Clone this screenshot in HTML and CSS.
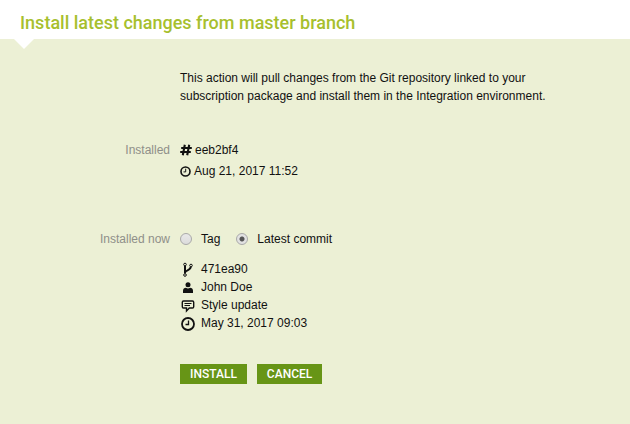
FILE: index.html
```html
<!DOCTYPE html>
<html lang="en">
<head>
<meta charset="utf-8">
<title>Install latest changes from master branch</title>
<link rel="stylesheet" href="styles.css">
</head>
<body>
<header class="header"><h1 class="title">Install latest changes from master branch</h1></header>
<main class="panel">
  <form class="form">
    <p class="intro">This action will pull changes from the Git repository linked to your subscription package and install them in the Integration environment.</p>
    <section class="row installed">
      <h2 class="label">Installed</h2>
      <ul class="list current">
        <li class="item">
          <svg class="icon-small" viewBox="0 0 12 12" aria-hidden="true"><path d="M4.800 .8 2.800 11.200M9.200 .8 7.200 11.200M1.200 4h10.600M.2 8h10.600" fill="none" stroke="currentColor" stroke-width="2.100"/></svg>
          <span>eeb2bf4</span>
        </li>
        <li class="item">
          <svg class="icon-clock" viewBox="0 0 11 11" aria-hidden="true"><circle cx="5.500" cy="5.500" r="4.500" fill="none" stroke="currentColor" stroke-width="1.600"/><path d="M5.700 2.700v3.200H3.500" fill="none" stroke="currentColor"/></svg>
          <span>Aug 21, 2017 11:52</span>
        </li>
      </ul>
    </section>
    <section class="row target">
      <h2 class="label" id="target-label">Installed now</h2>
      <div>
        <div class="choices" role="radiogroup" aria-labelledby="target-label">
          <label class="choice"><input class="radio" type="radio" name="source" value="tag">Tag</label>
          <label class="choice"><input class="radio" type="radio" name="source" value="commit" checked>Latest commit</label>
        </div>
        <ul class="list commit">
          <li class="item">
            <svg class="icon" viewBox="0 0 16 16" aria-hidden="true"><g fill="none" stroke="currentColor"><circle cx="5" cy="3.500" r="1.300"/><circle cx="5" cy="14" r="1.300"/><circle cx="11" cy="4.500" r="1.300"/><path stroke-width="2" d="M5 5v7.500M5 11.800c0-3 5.500-2 5.700-5.800"/></g></svg>
            <span>471ea90</span>
          </li>
          <li class="item">
            <svg class="icon" viewBox="0 0 16 16" aria-hidden="true"><g fill="currentColor"><circle cx="8" cy="5.800" r="2.500"/><path d="M3 14v-2.300C3 9.800 4.200 8.900 6 8.700c1.300.9 2.700.9 4 0 1.800.2 3 1.100 3 3V14z"/></g></svg>
            <span>John Doe</span>
          </li>
          <li class="item">
            <svg class="icon" viewBox="0 0 16 16" aria-hidden="true"><path d="M3.500 4h9q1.200 0 1.200 1.200v4.600q0 1.200-1.200 1.200H9.300L6.500 13.900V11h-3q-1.200 0-1.200-1.200V5.200q0-1.200 1.200-1.200z" fill="none" stroke="currentColor" stroke-width="1.400"/><path d="M4.500 6.500h7M4.500 8.500h5.500" stroke="currentColor"/></svg>
            <span>Style update</span>
          </li>
          <li class="item">
            <svg class="icon" viewBox="0 0 16 16" aria-hidden="true"><circle cx="8" cy="9" r="6" fill="none" stroke="currentColor" stroke-width="1.800"/><path d="M8.500 5.500v4H5.500" fill="none" stroke="currentColor" stroke-width="1.300"/></svg>
            <span>May 31, 2017 09:03</span>
          </li>
        </ul>
        <div class="actions">
          <button class="button" type="submit">INSTALL</button>
          <button class="button" type="button">CANCEL</button>
        </div>
      </div>
    </section>
  </form>
</main>
</body>
</html>
```
FILE: styles.css
```css
* {
  box-sizing: border-box;
}

body {
  margin: 0;
  min-height: 100vh;
  display: flex;
  flex-direction: column;
  background: #fff;
  color: #111;
  font: 12px/18px "Liberation Sans", Arial, sans-serif;
}

.header {
  padding: 11px 20px 4px;
}

.title {
  margin: 0;
  color: #a7bf2e;
  font: 500 18px/24px Roboto, sans-serif;
}

.panel {
  position: relative;
  flex: 1;
  padding: 30px 20px 40px;
  background: #ecf0d5;
}

.panel::before {
  content: "";
  position: absolute;
  top: 0;
  left: 14px;
  border: 10px solid transparent;
  border-top-color: #fff;
  border-bottom: 0;
}

.intro {
  max-width: 540px;
  margin: 0 0 36px;
  padding-left: 160px;
}

.row {
  display: grid;
  grid-template-columns: 150px 1fr;
  column-gap: 10px;
}

.installed {
  margin-bottom: 50px;
}

.label {
  margin: 0;
  color: #8f8f89;
  font: inherit;
  text-align: right;
}

.list {
  display: grid;
  margin: 0;
  padding: 0;
  list-style: none;
}

.current {
  row-gap: 3px;
}

.item {
  display: flex;
  align-items: center;
}

.icon-small,
.icon-clock,
.icon {
  flex: none;
}

.icon-small {
  width: 12px;
  height: 12px;
  margin-right: 3px;
}

.icon-clock {
  width: 11px;
  height: 11px;
  margin-right: 3px;
}

.icon {
  width: 16px;
  height: 16px;
  margin-right: 5px;
}

.choices {
  display: flex;
  gap: 16px;
  margin-bottom: 12px;
}

.choice {
  display: flex;
  align-items: center;
  gap: 9px;
}

.radio {
  appearance: none;
  width: 12px;
  height: 12px;
  margin: 0;
  border: 1px solid #a9a9a9;
  border-radius: 50%;
  background: linear-gradient(#e8e8e8, #dcdcdc);
}

.radio:checked {
  background: radial-gradient(circle, #555 0 2px, #e2e2e2 3px);
}

.actions {
  display: flex;
  gap: 10px;
  margin-top: 32px;
}

.button {
  height: 20px;
  padding: 0 10px;
  border: 0;
  background: #679516;
  color: #fff;
  font: 500 12px/20px Roboto, sans-serif;
}
```
